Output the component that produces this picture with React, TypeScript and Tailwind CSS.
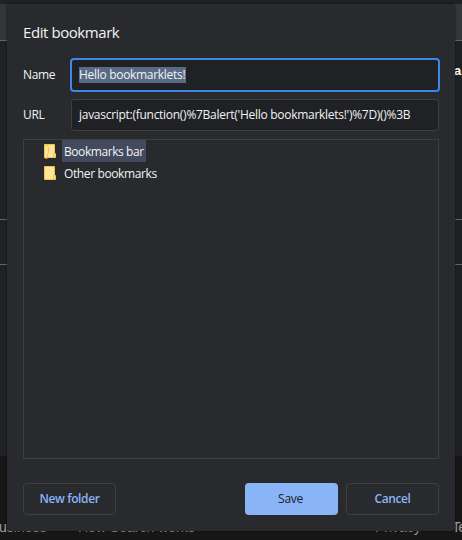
import type { ReactNode } from "react";

function FolderIcon({ open = false }: { open?: boolean }) {
  return (
    <svg width="12" height="16" viewBox="0 0 12 16" className="shrink-0" fill="none">
      <path d="M.5 1.5h10v9h1v4H.5z" fill="#ffe597" stroke="#edc44f" />
      <path d="M9.5 14v-3.500h1.500" stroke="#edc44f" />
      {open && <path d="M.5 1.5l3 1.5q1 .8 1 3v3.5q0 1.5-1.5 2v4l-2.500-1z" fill="#ffe597" stroke="#edc44f" />}
    </svg>
  );
}

function TreeItem({ label, selected = false }: { label: string; selected?: boolean }) {
  return (
    <div className="flex h-[22px] items-center pl-5">
      <FolderIcon open={selected} />
      <span
        className={`ml-1.5 h-[22px] pl-0.5 leading-[23px] ${selected ? "w-[84px] bg-[#434a5e] tracking-[-0.43px]" : "tracking-[-0.38px]"}`}
      >
        {label}
      </span>
    </div>
  );
}

function Field({ label, children }: { label: string; children: ReactNode }) {
  return (
    <div className="flex h-8 items-center">
      <span className="w-12 tracking-[-0.35px]">{label}</span>
      {children}
    </div>
  );
}

function Page() {
  return (
    <div className="flex h-full flex-col">
      <div className="h-1 bg-[#202124]" />
      <div className="h-[37px] border-b border-[#5f6368] bg-[#35363a]" />
      <div className="h-[179px] border-b border-[#5f6368] pt-[21px]">
        <div className="pl-[454px] text-[13px] leading-[18px] font-bold text-white">a</div>
      </div>
      <div className="h-[45px] border-b border-[#5f6368]" />
      <div className="h-[191px]" />
      <div className="flex flex-1 items-start bg-[#171717] pt-[61px] text-[14px] leading-5 whitespace-nowrap text-[#9aa0a6]">
        <span className="-ml-[1px] w-[79px] shrink-0">usiness</span>
        <span className="w-[297px] shrink-0">How Search works</span>
        <span className="w-[77px] shrink-0">Privacy</span>
        <span className="tracking-[-0.5px]">Te</span>
      </div>
    </div>
  );
}

export default function App() {
  return (
    <div className="relative h-[540px] w-[462px] overflow-hidden bg-[#202124] font-['Liberation_Sans',sans-serif]">
      <Page />
      <section className="absolute top-1 left-[7px] flex h-[527px] w-[448px] flex-col rounded-[4px] bg-[#292a2d] px-4 pt-[17px] font-['Open_Sans',sans-serif] text-[12px] text-[#f1f3f4] shadow-[0_0_2px_#000000cc]">
        <h1 className="h-[38px] text-[15px] leading-[22px] tracking-[-0.43px] whitespace-nowrap">Edit bookmark</h1>
        <Field label="Name">
          <div className="-mx-px flex h-[34px] flex-1 items-center rounded-[4px] border-2 border-[#4285e8] bg-[#202124] pl-[7px]">
            <span className="h-4 w-[107px] bg-[#596a85] leading-4 tracking-[-0.3px] whitespace-nowrap">Hello bookmarklets!</span>
          </div>
        </Field>
        <div className="h-2" />
        <Field label="URL">
          <div className="flex h-8 flex-1 items-center rounded-[3px] border border-[#3c4043] bg-[#202124] pl-[7px] tracking-[-0.28px] whitespace-nowrap">
            {"javascript:(function()%7Balert('Hello bookmarklets!')%7D)()%3B"}
          </div>
        </Field>
        <div className="mt-2 h-[320px] border border-[#3c4043]">
          <TreeItem label="Bookmarks bar" selected />
          <TreeItem label="Other bookmarks" />
        </div>
        <div className="mt-6 flex h-8 items-center font-semibold text-[#8ab4f8]">
          <button className="h-8 w-[93px] rounded-[4px] border border-[#3c4043] tracking-[-0.38px]">New folder</button>
          <button className="ml-auto h-8 w-[93px] rounded-[4px] bg-[#8ab4f8] pr-0.5 font-medium tracking-[-0.3px] text-[#202124]">Save</button>
          <button className="ml-2 h-8 w-[93px] rounded-[4px] border border-[#3c4043] tracking-[-0.38px]">Cancel</button>
        </div>
      </section>
    </div>
  );
}
